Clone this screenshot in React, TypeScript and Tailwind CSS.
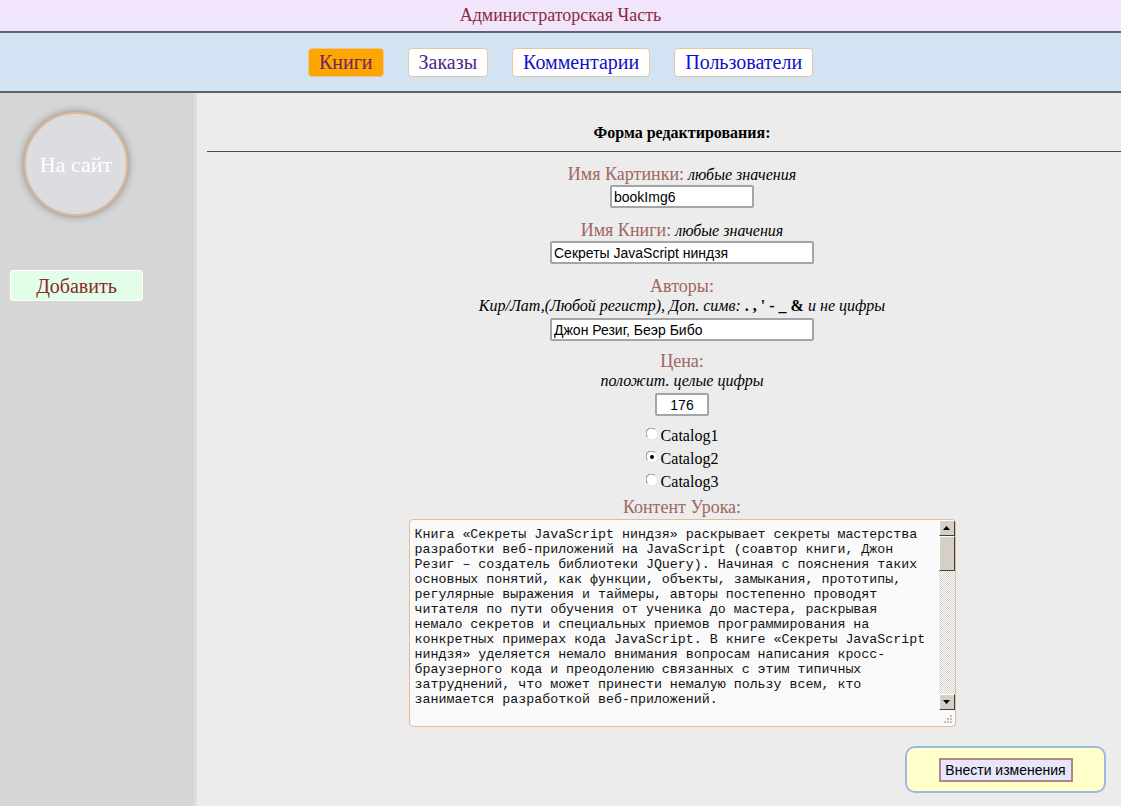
const serif = "font-['Liberation_Serif',serif]";
const sans = "font-['Liberation_Sans',Arial,sans-serif]";

const lines = [
  "Книга «Секреты JavaScript ниндзя» раскрывает секреты мастерства",
  "разработки веб-приложений на JavaScript (соавтор книги, Джон",
  "Резиг – создатель библиотеки JQuery). Начиная с пояснения таких",
  "основных понятий, как функции, объекты, замыкания, прототипы,",
  "регулярные выражения и таймеры, авторы постепенно проводят",
  "читателя по пути обучения от ученика до мастера, раскрывая",
  "немало секретов и специальных приемов программирования на",
  "конкретных примерах кода JavaScript. В книге «Секреты JavaScript",
  "ниндзя» уделяется немало внимания вопросам написания кросс-",
  "браузерного кода и преодолению связанных с этим типичных",
  "затруднений, что может принести немалую пользу всем, кто",
  "занимается разработкой веб-приложений.",
];

function NavButton(props: { label: string; active?: boolean; color: string }) {
  return (
    <button
      className={`mx-[12px] h-[29px] px-[10px] rounded-[4px] border border-[#e6c79b] text-[20px] leading-none ${serif} ${
        props.active ? "bg-[#ffa500]" : "bg-white"
      } ${props.color}`}
    >
      {props.label}
    </button>
  );
}

function Label(props: { text: string; hint?: string; className?: string }) {
  return (
    <div className={`h-[20px] leading-[20px] whitespace-nowrap ${serif} ${props.className ?? ""}`}>
      <span className="text-[18px] text-[#a0675e]">{props.text}</span>
      {props.hint && <span className="italic text-[16px] text-black"> {props.hint}</span>}
    </div>
  );
}

function TextInput(props: { value: string; w: string; center?: boolean; className?: string }) {
  return (
    <input
      readOnly
      value={props.value}
      className={`${props.w} h-[23px] bg-white border-2 border-[#a5a5a5] rounded-[2px] px-[2px] text-[14px] text-black outline-none ${sans} ${
        props.center ? "text-center" : ""
      } ${props.className ?? ""}`}
    />
  );
}

function Radio(props: { label: string; checked?: boolean }) {
  return (
    <div className={`h-[23px] flex items-center gap-[3px] text-[16px] text-black ${serif}`}>
      <svg width="12" height="12" viewBox="0 0 12 12" className="-mt-[3px]">
        <circle cx="6" cy="6" r="5.5" fill="#fff" />
        <path d="M1.5 9 A5 5 0 0 1 9 1.5" stroke="#808080" strokeWidth="1" fill="none" />
        <path d="M10.5 3 A5 5 0 0 1 3 10.5" stroke="#e0e0e0" strokeWidth="1" fill="none" />
        {props.checked && <circle cx="6" cy="6" r="2" fill="#000" />}
      </svg>
      <span>{props.label}</span>
    </div>
  );
}

function ArrowBox(props: { up?: boolean }) {
  return (
    <div className="h-[16px] w-[16px] bg-[#d4d0c8] border border-t-white border-l-white border-r-[#404040] border-b-[#404040] flex items-center justify-center">
      <svg width="7" height="4" viewBox="0 0 7 4">
        <path d={props.up ? "M3.5 0 L7 4 L0 4 Z" : "M0 0 L7 0 L3.5 4 Z"} fill="#000" />
      </svg>
    </div>
  );
}

export default function App() {
  return (
    <div className="min-h-screen flex flex-col bg-[#ececec]">
      <div className={`h-[33px] bg-[#f1e5fb] border-b-2 border-[#5d636b] flex items-center justify-center text-[18px] text-[#8b2a3c] ${serif}`}>
        Администраторская Часть
      </div>
      <div className="h-[60px] bg-[#d2e4f3] border-b-2 border-[#5d636b] flex items-center justify-center">
        <NavButton label="Книги" active color="text-[#6b2760]" />
        <NavButton label="Заказы" color="text-[#4b2a8c]" />
        <NavButton label="Комментарии" color="text-[#1010c8]" />
        <NavButton label="Пользователи" color="text-[#1010c8]" />
      </div>

      <div className="flex-1 flex">
        <aside className="w-[197px] shrink-0 bg-[#d6d6d6] border-r-[3px] border-[#dedede]">
          <div className="ml-[24px] mt-[19px] w-[104px] h-[104px] rounded-full bg-[#dcdde0] border-2 border-[#dfb998] shadow-[0_0_9px_rgba(0,0,0,0.4)] flex items-center justify-center">
            <span className={`text-white text-[22px] ${serif}`}>На сайт</span>
          </div>
          <button className={`ml-[10px] mt-[54px] w-[133px] h-[31px] bg-[#e2fde8] border border-white rounded-[3px] text-[20px] text-[#8b2a2a] ${serif}`}>
            Добавить
          </button>
        </aside>

        <main className="flex-1 pl-[10px] flex flex-col">
          <div className="pl-[36px] pt-[30px]">
            <h2 className={`text-center font-bold text-[16px] leading-[20px] text-black ${serif}`}>
              Форма редактирования:
            </h2>
          </div>
          <hr className="mt-[8px] border-t border-[#4a4a4a]" />

          <div className="pl-[36px] flex flex-col items-center">
            <Label className="mt-[12px]" text="Имя Картинки:" hint="любые значения" />
            <TextInput className="mt-[1px]" w="w-[144px]" value="bookImg6" />

            <Label className="mt-[12px]" text="Имя Книги:" hint="любые значения" />
            <TextInput className="mt-[1px]" w="w-[264px]" value="Секреты JavaScript ниндзя" />

            <Label className="mt-[12px]" text="Авторы:" />
            <div className={`h-[20px] leading-[20px] italic text-[16px] text-black whitespace-nowrap ${serif}`}>
              Кир/Лат,(Любой регистр), Доп. симв: <b className="not-italic">. , ' - _ &amp;</b> и не цифры
            </div>
            <TextInput className="mt-[2px]" w="w-[264px]" value="Джон Резиг, Беэр Бибо" />

            <Label className="mt-[10px]" text="Цена:" />
            <div className={`h-[20px] leading-[20px] italic text-[16px] text-black ${serif}`}>
              положит. целые цифры
            </div>
            <TextInput className="mt-[2px]" w="w-[54px]" value="176" center />

            <div className="mt-[8px] flex flex-col">
              <Radio label="Catalog1" />
              <Radio label="Catalog2" checked />
              <Radio label="Catalog3" />
            </div>

            <Label className="mt-[4px]" text="Контент Урока:" />
            <div className="mt-[2px] w-[547px] h-[208px] bg-[#fafafa] border border-[#f0b596] rounded-[4px] flex overflow-hidden">
              <div className={`flex-1 pl-[5px] pt-[7px] text-[13.3px] leading-[15px] text-[#111] whitespace-pre font-['Liberation_Mono','Courier_New',monospace]`}>
                {lines.map((l, i) => (
                  <div key={i}>{l}</div>
                ))}
              </div>
              <div className="w-[16px] flex flex-col">
                <ArrowBox up />
                <div className="h-[35px] bg-[#d4d0c8] border border-t-white border-l-white border-r-[#404040] border-b-[#404040]" />
                <div className="flex-1 bg-[repeating-conic-gradient(#ffffff_0%_25%,#d4d0c8_0%_50%)] bg-[length:2px_2px]" />
                <ArrowBox />
                <div className="h-[16px] flex items-end justify-end pr-[2px] pb-[2px]">
                  <svg width="10" height="10" viewBox="0 0 10 10">
                    <rect x="7" y="1" width="2" height="2" fill="#c0c0c0" />
                    <rect x="4" y="4" width="2" height="2" fill="#c0c0c0" />
                    <rect x="7" y="4" width="2" height="2" fill="#c0c0c0" />
                    <rect x="1" y="7" width="2" height="2" fill="#c0c0c0" />
                    <rect x="4" y="7" width="2" height="2" fill="#c0c0c0" />
                    <rect x="7" y="7" width="2" height="2" fill="#c0c0c0" />
                  </svg>
                </div>
              </div>
            </div>
          </div>

          <div className="flex justify-end pr-[15px] mt-[19px] pb-[12px]">
            <div className="w-[201px] h-[47px] bg-[#ffffc9] border-2 border-[#9cb9e2] rounded-[10px] flex items-center justify-center">
              <button className={`w-[134px] h-[24px] bg-[#e6e6fb] border-2 border-[#b58585] text-[14px] text-black ${sans}`}>
                Внести изменения
              </button>
            </div>
          </div>
        </main>
      </div>
    </div>
  );
}
